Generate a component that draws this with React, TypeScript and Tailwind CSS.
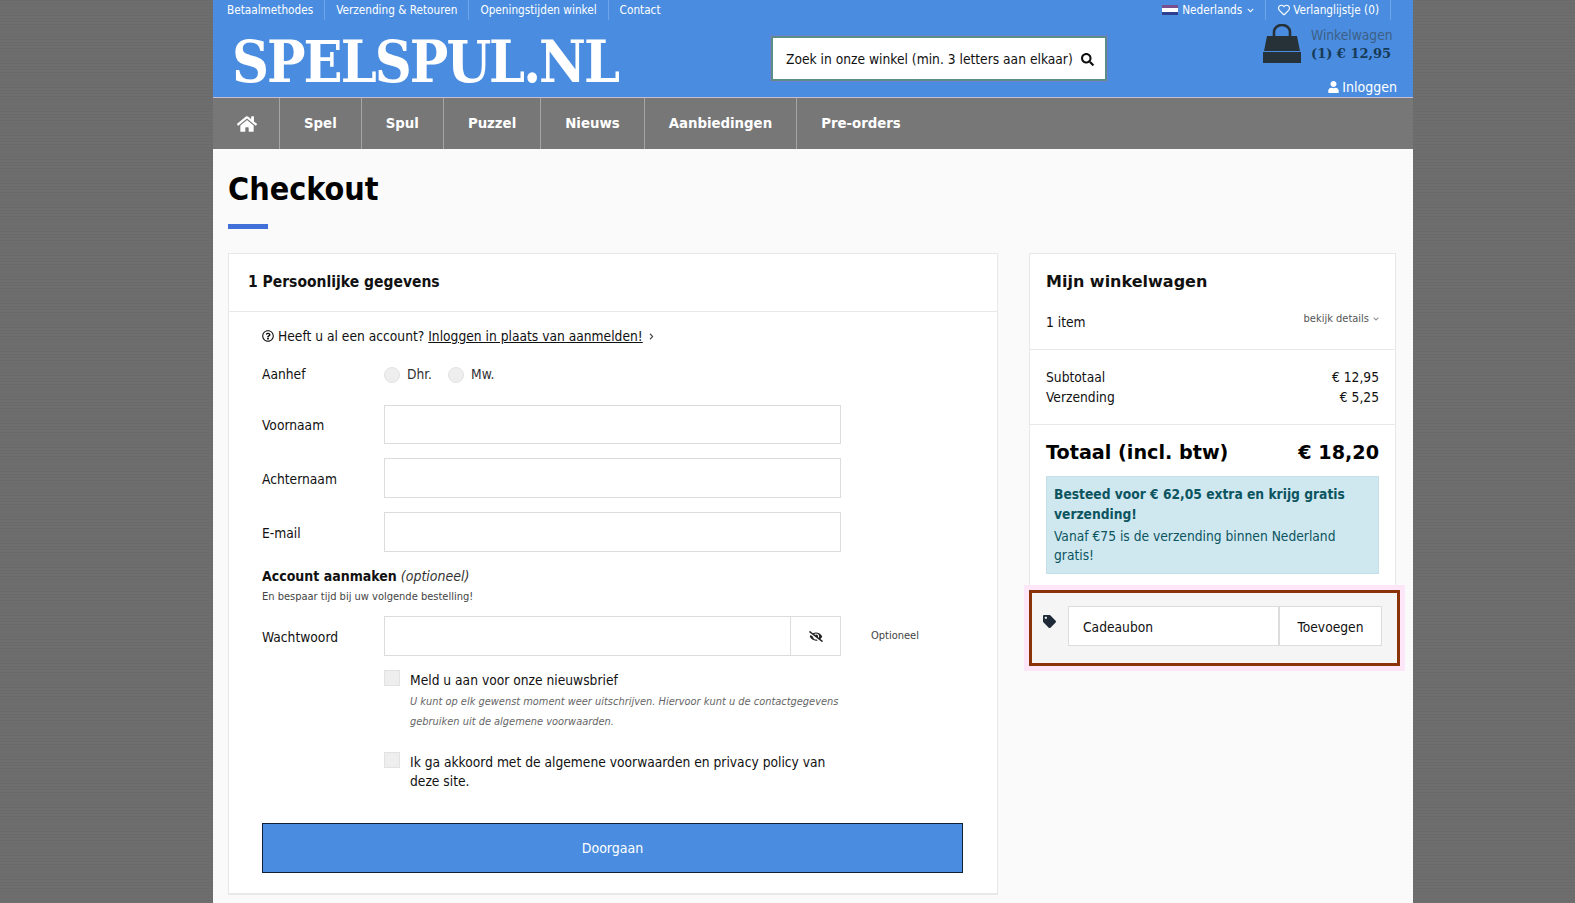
import React from 'react';
import { FaHome, FaSearch, FaUser, FaRegHeart, FaTag, FaEyeSlash, FaRegQuestionCircle, FaChevronDown, FaChevronRight } from 'react-icons/fa';

const topLinks = ['Betaalmethodes', 'Verzending & Retouren', 'Openingstijden winkel', 'Contact'];
const navItems = ['Spel', 'Spul', 'Puzzel', 'Nieuws', 'Aanbiedingen', 'Pre-orders'];

const Bag = () => (
  <svg width="40" height="40" viewBox="0 0 40 40" className="block">
    <path d="M12 17V8a8 7 0 0 1 16 0v9" fill="none" stroke="#263238" strokeWidth="2.6" />
    <path d="M5 12h30l3 15H2z" fill="#263238" />
    <path d="M1 28h38v11H1z" fill="#263238" />
  </svg>
);

const InputRow = ({ label, className, inputClass = 'h-[40px]' }: { label: string; className: string; inputClass?: string }) => (
  <div className={`flex items-center ${className}`}>
    <span className="w-[122px] mt-[2px] text-[13.7px]">{label}</span>
    <div className={`w-[457px] bg-white border border-[#dcdcdc] ${inputClass}`}></div>
  </div>
);

const Radio = ({ label }: { label: string }) => (
  <div className="flex items-center gap-[7px]">
    <span className="w-[16px] h-[16px] mt-[2px] rounded-full bg-[#eeeeee] border border-[#e2e2e2]"></span>
    <span className="text-[13.7px] text-[#333333]">{label}</span>
  </div>
);

const Checkbox = () => <span className="w-[16px] h-[16px] shrink-0 bg-[#eeeeee] border border-[#e2e2e2]"></span>;

export default function App() {
  return (
    <div className="h-[903px] overflow-hidden bg-[repeating-linear-gradient(0deg,#6e6e6e_0px,#6e6e6e_2px,#6a6a6a_2px,#6a6a6a_3px)] font-['DejaVu_Sans_Condensed','DejaVu_Sans',sans-serif] text-[#111111]">
      <div className="ml-[213px] w-[1200px] h-full bg-[#fafafa]">
        <header className="relative h-[97px] bg-[#4a8de0] text-white">
          <div className="flex items-center justify-between h-[20px] pl-[14px] pr-[22px] text-[11.7px] leading-[20px]">
            <div className="flex items-center">
              {topLinks.map((link, i) => (
                <span key={link} className={`px-[11px] ${i === 0 ? 'pl-0' : ''} ${i < topLinks.length - 1 ? 'border-r border-[#6ea4e8]' : ''}`}>
                  {link}
                </span>
              ))}
            </div>
            <div className="flex items-center">
              <span className="flex flex-col w-[16px] h-[10px] mr-[4px]">
                <span className="flex-1 bg-[#7a4f90]"></span>
                <span className="flex-1 bg-white"></span>
                <span className="flex-1 bg-[#2f3f90]"></span>
              </span>
              <span>Nederlands</span>
              <FaChevronDown className="w-[7px] h-[7px] ml-[5px] mr-[11px]" />
              <span className="flex items-center pl-[12px] pr-[11px] border-x border-[#6ea4e8]">
                <FaRegHeart className="w-[12px] h-[12px] mr-[3px]" />
                Verlanglijstje (0)
              </span>
            </div>
          </div>

          <div className="flex items-start">
            <div className="w-[558px] pl-[19px] pt-[7px] font-['DejaVu_Serif_Condensed','DejaVu_Serif',serif] font-bold text-[57px] leading-[70px] tracking-[-2px] text-white whitespace-nowrap">
              SPELSPUL.NL
            </div>
            <div className="flex items-center justify-between w-[336px] h-[45px] mt-[16px] pt-[1px] bg-white border-2 border-[#5a8f88] shadow-[0_0_0_1px_#6b7fd8] pl-[13px] pr-[11px] text-[#111111] text-[13.7px]">
              <span>Zoek in onze winkel (min. 3 letters aan elkaar)</span>
              <FaSearch className="w-[13px] h-[13px]" />
            </div>
            <div className="flex ml-[155px] mt-[4px]">
              <Bag />
              <div className="ml-[9px]">
                <div className="text-[13.7px] leading-[20px] mt-[1px] text-[#3d5f86]">Winkelwagen</div>
                <div className="font-['DejaVu_Serif',serif] font-bold text-[13px] leading-[18px] text-[#173a56]">(1) € 12,95</div>
              </div>
            </div>
          </div>

          <div className="absolute right-[16px] top-[78px] flex items-center text-[14px] leading-[18px]">
            <FaUser className="w-[11px] h-[12px] mr-[3px]" />
            Inloggen
          </div>
        </header>

        <nav className="flex h-[52px] bg-[#777777] border-t border-[#c9bcd0] text-white font-bold text-[14.8px]">
          <div className="flex items-center w-[67px] pl-[24px] border-r border-[#a5a5a5]">
            <FaHome className="w-[20px] h-[18px]" />
          </div>
          {navItems.map((item, i) => (
            <div key={item} className={`flex items-center px-[24px] ${i < navItems.length - 1 ? 'border-r border-[#a5a5a5]' : ''}`}>
              {item}
            </div>
          ))}
        </nav>

        <main className="pl-[15px]">
          <h1 className="mt-[21px] h-[38px] text-[32px] leading-[38px] font-bold text-black">Checkout</h1>
          <div className="mt-[16px] w-[40px] h-[5px] bg-[#4070d8]"></div>

          <div className="flex items-start gap-[31px] mt-[24px]">
            <section className="w-[770px] bg-white border border-[#e8e8e8] border-b-2">
              <div className="h-[58px] flex items-center pl-[19px] border-b border-[#e8e8e8] font-bold text-[15.5px]">
                1 Persoonlijke gegevens
              </div>

              <div className="pl-[33px] pb-[20px]">
                <div className="flex items-center mt-[14px] h-[20px] text-[13.7px]">
                  <FaRegQuestionCircle className="w-[12px] h-[12px] mr-[4px]" />
                  <span>Heeft u al een account?&nbsp;</span>
                  <span className="underline">Inloggen in plaats van aanmelden!</span>
                  <FaChevronRight className="w-[7px] h-[7px] ml-[5px] text-[#444444]" />
                </div>

                <div className="flex items-center mt-[18px] h-[20px]">
                  <span className="w-[122px] text-[13.7px]">Aanhef</span>
                  <div className="flex items-center gap-[16px]">
                    <Radio label="Dhr." />
                    <Radio label="Mw." />
                  </div>
                </div>

                <InputRow label="Voornaam" className="mt-[21px]" inputClass="h-[39px]" />
                <InputRow label="Achternaam" className="mt-[14px]" />
                <InputRow label="E-mail" className="mt-[14px]" />

                <div className="mt-[14px] h-[20px] text-[14px] leading-[20px]">
                  <span className="font-bold">Account aanmaken</span> <em className="text-[#333333]">(optioneel)</em>
                </div>
                <div className="mt-[2px] h-[16px] text-[11px] leading-[17px] text-[#444444]">En bespaar tijd bij uw volgende bestelling!</div>

                <div className="flex items-center mt-[12px]">
                  <span className="w-[122px] mt-[2px] text-[13.7px]">Wachtwoord</span>
                  <div className="flex w-[457px] h-[40px] bg-white border border-[#dcdcdc]">
                    <div className="flex-1"></div>
                    <div className="flex items-center justify-center w-[50px] border-l border-[#dcdcdc]">
                      <FaEyeSlash className="w-[14px] h-[11px] text-[#222222]" />
                    </div>
                  </div>
                  <span className="ml-[30px] mt-[1px] text-[11px] text-[#444444]">Optioneel</span>
                </div>

                <div className="flex mt-[14px] pl-[122px]">
                  <Checkbox />
                  <div className="w-[436px] ml-[10px]">
                    <div className="text-[13.7px] leading-[20px]">Meld u aan voor onze nieuwsbrief</div>
                    <p className="mt-[2px] text-[10.95px] leading-[20px] italic text-[#666666]">
                      U kunt op elk gewenst moment weer uitschrijven. Hiervoor kunt u de contactgegevens gebruiken uit de algemene voorwaarden.
                    </p>
                  </div>
                </div>

                <div className="flex mt-[20px] pl-[122px]">
                  <Checkbox />
                  <div className="w-[436px] ml-[10px] mt-[1px] text-[13.7px] leading-[19px]">
                    Ik ga akkoord met de algemene voorwaarden en privacy policy van deze site.
                  </div>
                </div>

                <button className="block mt-[32px] w-[701px] h-[50px] pt-[1px] bg-[#4a8de0] border border-[#10203a] text-white text-[14px]">
                  Doorgaan
                </button>
              </div>
            </section>

            <aside className="w-[367px]">
              <div className="bg-white border border-[#e8e8e8] border-b-0">
                <div className="h-[96px] px-[16px] border-b border-[#e8e8e8]">
                  <div className="pt-[16px] font-['DejaVu_Sans',sans-serif] font-bold text-[16px] leading-[24px]">Mijn winkelwagen</div>
                  <div className="flex justify-between mt-[15px]">
                    <span className="mt-[3px] text-[13.7px] leading-[20px]">1 item</span>
                    <span className="flex items-center h-[20px] text-[11px] text-[#555555]">
                      bekijk details
                      <FaChevronDown className="w-[6px] h-[6px] ml-[4px] text-[#888888]" />
                    </span>
                  </div>
                </div>
                <div className="h-[75px] pt-[17px] px-[16px] border-b border-[#e8e8e8] text-[13.7px] leading-[20px]">
                  <div className="flex justify-between"><span>Subtotaal</span><span>€ 12,95</span></div>
                  <div className="flex justify-between"><span>Verzending</span><span>€ 5,25</span></div>
                </div>
                <div className="px-[16px] pb-[16px]">
                  <div className="flex justify-between mt-[14px] h-[28px] font-['DejaVu_Sans',sans-serif] font-bold text-[19.2px] leading-[28px] text-black">
                    <span>Totaal (incl. btw)</span>
                    <span>€ 18,20</span>
                  </div>
                  <div className="mt-[9px] h-[98px] px-[7px] pt-[7px] bg-[#cfe8f0] border border-[#c4dfe8] text-[#0c5460] text-[13.7px] leading-[20px]">
                    <div className="font-bold">Besteed voor € 62,05 extra en krijg gratis verzending!</div>
                    <div className="mt-[3px] leading-[19px]">Vanaf €75 is de verzending binnen Nederland gratis!</div>
                  </div>
                </div>
              </div>

              <div className="flex w-[371px] h-[76px] pl-[11px] pt-[13px] bg-[#f5f5f5] border-[3px] border-[#8a3208] shadow-[0_0_0_5px_#fde6f7]">
                <FaTag className="w-[13px] h-[13px] mt-[9px] mr-[12px] text-[#1e2a38]" />
                <div className="flex items-center w-[211px] h-[40px] pl-[14px] pt-[2px] bg-white border border-[#dcdcdc] text-[13.7px]">Cadeaubon</div>
                <div className="flex items-center justify-center w-[103px] h-[40px] pt-[2px] bg-white border border-[#dcdcdc] text-[13.7px]">Toevoegen</div>
              </div>
            </aside>
          </div>
        </main>
      </div>
    </div>
  );
}
